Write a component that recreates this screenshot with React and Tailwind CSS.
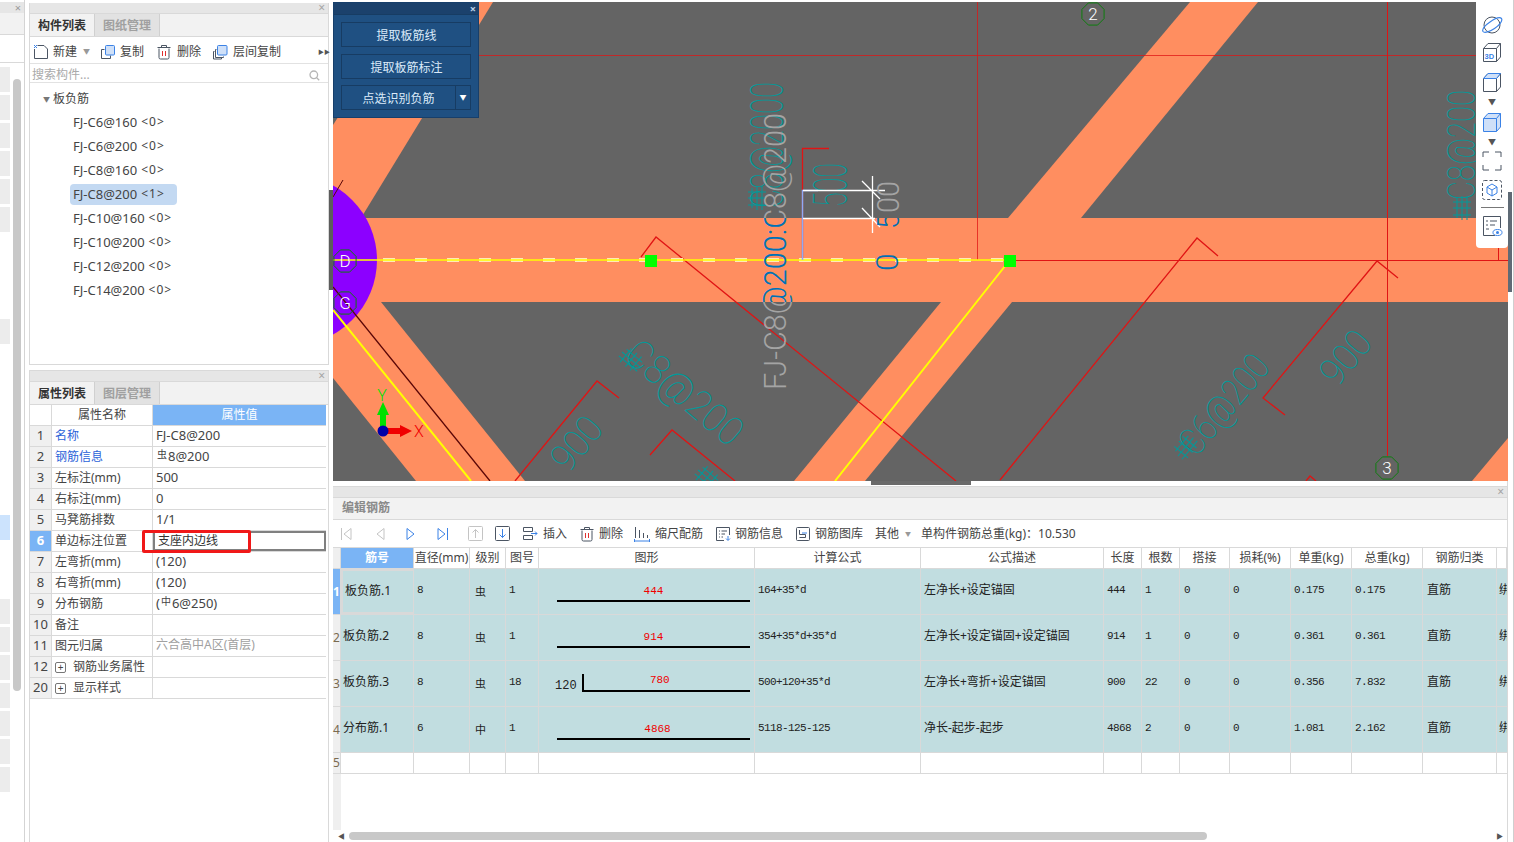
import React from 'react';

const slate = '#4b5563';
const blue = '#3b82e6';
const pale = '#cfe0f8';

// ---------- icons ----------
const Ic = ({ w = 16, h = 16, children, className = '' }) => (
  <svg width={w} height={h} viewBox={`0 0 ${w} ${h}`} fill="none" className={`shrink-0 ${className}`}>{children}</svg>
);

const NewIcon = () => (
  <Ic>
    <path d="M4.500 1.500H11l3.500 3.500v9.500h-13V5" stroke={slate} />
    <path d="M1 1h1v1H1zM3 1h1v1H3zM2 2h1v1H2zM1 3h1v1H1zM3 3h1v1H3z" fill={blue} />
  </Ic>
);
const CopyIcon = () => (
  <Ic>
    <path d="M4.500 5.500h-3v9h9v-3" stroke={slate} />
    <rect x="5.500" y="1.500" width="9" height="9.500" rx="1" fill={pale} stroke={blue} />
  </Ic>
);
const TrashIcon = () => (
  <Ic w={14}>
    <path d="M2 4.500v9a1.500 1.500 0 0 0 1.500 1.500h7a1.500 1.500 0 0 0 1.500-1.500v-9M.5 3.500h13M4.500 3.500V1.500h5v2" stroke={slate} />
    <path d="M5.500 7v5M8.500 7v5" stroke="#e03030" />
  </Ic>
);
const FloorCopyIcon = () => (
  <Ic>
    <path d="M4.500 5.500h-1v8h8v-1M2.500 7.500h-1v7.500h8v-1" stroke={slate} />
    <rect x="5.500" y="1.500" width="9.500" height="9.500" rx="1" fill={pale} stroke={blue} />
  </Ic>
);
const Tri = ({ dir = 'left', bar, color }) => (
  <Ic w={12} h={14}>
    {dir === 'left' ? <path d="M10 1.500v11L3 7z" stroke={color} /> : <path d="M2 1.500v11L9 7z" stroke={color} />}
    {bar && <path d={dir === 'left' ? 'M.5 1v12' : 'M11.500 1v12'} stroke={color} />}
  </Ic>
);
const BoxArrow = ({ up }) => (
  <Ic w={15} h={15}>
    <rect x=".5" y=".5" width="14" height="14" rx="1" stroke={up ? '#c4c4c4' : slate} />
    {up
      ? <path d="M7.500 12V3.500M4.500 6.500l3-3 3 3" stroke="#c4c4c4" />
      : <path d="M7.500 3v8.500M4.500 8.500l3 3 3-3" stroke={blue} />}
  </Ic>
);
const InsertIcon = () => (
  <Ic>
    <path d="M1.500 1.500h9v4h-9zM1.500 9.500h9v4h-9z" stroke={slate} />
    <path d="M9 7.500h6M13 5.500l2 2-2 2" stroke={blue} />
  </Ic>
);
const ScaleIcon = () => (
  <Ic>
    <path d="M1.500 1v11M5.500 4v8M9.500 7v5M13.500 9v3" stroke={slate} />
    <path d="M.5 15h15M.5 13v3M15.500 13v3" stroke={blue} />
  </Ic>
);
const InfoIcon = () => (
  <Ic>
    <path d="M9 14.500H1.500v-13h13V9" stroke={slate} />
    <path d="M4 5h1M6.500 5H12M4 8h1M6.500 8H10M4 11h1M6.500 11H8" stroke={slate} />
    <path d="M13 10v4M11 12.500l2 2 2-2" stroke={blue} />
  </Ic>
);
const LibIcon = () => (
  <Ic>
    <rect x="1.500" y="1.500" width="13" height="13" rx="1" stroke={slate} />
    <path d="M4.500 4v4.500h6v3h-6" stroke={slate} />
    <path d="M7 7h5" stroke={blue} />
  </Ic>
);
const Cube = ({ fill, stroke, children }) => (
  <Ic w={20} h={21}>
    <path d="M1.500 6.500 6 1.500h12.500v13.500L14.500 19.500h-13z" fill={fill || 'none'} stroke={stroke} strokeLinejoin="round" />
    <path d="M1.500 6.500h13v13M14.500 6.500 18.500 1.500" stroke={stroke} />
    {children}
  </Ic>
);

// ---------- left strip ----------
const stripSlots = [1, 1, 1, 1, 1, 1, 0, 0, 0, 1, 0, 0, 0, 0, 0, 0, 2, 0, 0, 1, 1, 1, 1, 1, 1, 1];

function LeftStrip() {
  return (
    <div className="w-[29px] shrink-0 h-full">
      <div className="w-[25px] h-full border-r border-[#d4d4d4]">
        <div className="h-[2px]" />
        <div className="h-[11px] bg-[#e6e6e6] flex items-center justify-end pr-[3px] text-[#9a9a9a] text-[11px] leading-none">×</div>
        <div className="h-[22px] bg-[#f2f2f2] border-b border-[#d9d9d9]" />
        <div className="h-[28px] border-b border-[#d9d9d9]" />
        <div className="flex">
          <div className="w-[10px] pt-[4px] flex flex-col gap-[3px]">
            {stripSlots.map((s, i) => (
              <div key={i} className={`h-[25px] ${s === 1 ? 'bg-[#ececec]' : s === 2 ? 'bg-[#cce3fd]' : ''}`} />
            ))}
          </div>
          <div className="ml-[3px] mt-[16px] w-[8px] h-[612px] rounded bg-[#c8c8c8]" />
        </div>
      </div>
    </div>
  );
}

// ---------- component list ----------
const treeItems = ['FJ-C6@160', 'FJ-C6@200', 'FJ-C8@160', 'FJ-C8@200', 'FJ-C10@160', 'FJ-C10@200', 'FJ-C12@200', 'FJ-C14@200'];

function PanelHead() {
  return (
    <div className="h-[11px] bg-[#e6e6e6] flex items-center justify-end pr-[3px] text-[#a5a5a5] text-[12px] leading-none border-b border-[#d9d9d9]">×</div>
  );
}

function Tabs({ a, b }) {
  return (
    <div className="h-[23px] bg-[#f2f2f2] border-b border-[#d9d9d9] flex font-bold">
      <div className="w-[65px] pt-[2px] flex items-center justify-center text-[#333] border-r border-[#d0d0d0]">{a}</div>
      <div className="w-[65px] pt-[2px] flex items-center justify-center text-[#a0a0a0] bg-[#e2e2e2] border-r border-[#d0d0d0]">{b}</div>
    </div>
  );
}

function ComponentPanel() {
  return (
    <div className="h-[362px] border border-[#d9d9d9] border-t-0 mt-[3px] flex flex-col">
      <PanelHead />
      <Tabs a="构件列表" b="图纸管理" />
      <div className="h-[27px] pt-[3px] border-b border-[#e2e2e2] flex items-center whitespace-nowrap">
        <div className="ml-[3px]"><NewIcon /></div>
        <span className="ml-[4px]">新建</span>
        <span className="ml-[6px] text-[#999] text-[7px]">▼</span>
        <div className="ml-[10px]"><CopyIcon /></div>
        <span className="ml-[4px]">复制</span>
        <div className="ml-[13px]"><TrashIcon /></div>
        <span className="ml-[6px]">删除</span>
        <div className="ml-[11px]"><FloorCopyIcon /></div>
        <span className="ml-[5px]">层间复制</span>
        <span className="ml-[37px] text-[6px] text-[#555]">▶▶</span>
      </div>
      <div className="h-[19px] pt-[4px] border-b border-[#e2e2e2] flex items-center justify-between pl-[2px] pr-[8px] text-[#aaa]">
        <span>搜索构件...</span>
        <svg width="11" height="11" viewBox="0 0 11 11" fill="none" stroke="#b5b5b5" strokeWidth="1.300">
          <circle cx="4.800" cy="4.800" r="3.800" /><path d="M7.700 7.700l2.500 2.500" />
        </svg>
      </div>
      <div className="flex-1 pt-[3px]">
        <div className="h-[24px] pt-[2px] flex items-center pl-[13px]">
          <span className="text-[#777] text-[7px] mr-[3px]">▼</span>板负筋
        </div>
        {treeItems.map((t, i) => (
          <div key={t} className="h-[24px] flex items-center pl-[40px]">
            <span className={`h-[21px] flex items-center px-[3px] text-[13px] rounded-sm ${i === 3 ? 'bg-[#c3d9f2] w-[107px]' : ''}`}>
              {t}<span className="ml-[4px] text-[12px] tracking-[1px]">&lt;{i === 3 ? 1 : 0}&gt;</span>
            </span>
          </div>
        ))}
      </div>
    </div>
  );
}

// ---------- property table ----------
const Sym = ({ children }) => <span className="text-[10px] relative -top-[2px] mx-[1px]">{children}</span>;

const props = [
  ['1', '名称', 'FJ-C8@200', 'blue'],
  ['2', '钢筋信息', <><Sym>虫</Sym>8@200</>, 'blue'],
  ['3', '左标注(mm)', '500'],
  ['4', '右标注(mm)', '0'],
  ['5', '马凳筋排数', '1/1'],
  ['6', '单边标注位置', <span className="text-[12px]">支座内边线</span>, 'sel'],
  ['7', '左弯折(mm)', '(120)'],
  ['8', '右弯折(mm)', '(120)'],
  ['9', '分布钢筋', <>(<Sym>中</Sym>6@250)</>],
  ['10', '备注', ''],
  ['11', '图元归属', <span className="text-[12px] text-[#a0a0a0]">六合高中A区(首层)</span>],
  ['12', '钢筋业务属性', '', 'plus'],
  ['20', '显示样式', '', 'plus'],
];

function PropertyPanel() {
  return (
    <div className="flex-1 mt-[5px] border border-[#d9d9d9] border-b-0 flex flex-col relative">
      <PanelHead />
      <Tabs a="属性列表" b="图层管理" />
      <div className="w-[296px]">
        <div className="grid grid-cols-[22px_101px_173px] h-[21px] border-b border-[#d9d9d9]">
          <div className="border-r border-[#d9d9d9]" />
          <div className="border-r border-[#d9d9d9] flex items-center justify-center">属性名称</div>
          <div className="bg-[#7ab4f5] text-white flex items-center justify-center">属性值</div>
        </div>
        {props.map(([n, name, val, kind]) => (
          <div key={n} className="grid grid-cols-[22px_101px_173px] h-[21px] border-b border-[#d9d9d9]">
            <div className={`border-r border-[#d9d9d9] text-[13px] pb-[2px] flex items-center justify-center ${kind === 'sel' ? 'bg-[#7ab4f5] text-white font-bold' : 'bg-[#f0f0f0]'}`}>{n}</div>
            <div className={`border-r border-[#d9d9d9] flex items-center pl-[3px] whitespace-nowrap ${kind === 'blue' ? 'text-[#2b63d9]' : ''}`}>
              {kind === 'plus' && (
                <span className="w-[11px] h-[11px] border border-[#777] rounded-[2px] mr-[7px] flex items-center justify-center text-[10px] leading-none">+</span>
              )}
              {name}
            </div>
            <div className={`flex items-center pl-[3px] text-[13px] ${kind === 'sel' ? 'border-2 border-[#808080] text-[#333]' : 'pb-[2px]'}`}>{val}</div>
          </div>
        ))}
      </div>
      {/* red annotation box */}
      <div className="absolute left-[112px] top-[159px] w-[109px] h-[23px] border-[3px] border-[#f01818] rounded-[2px]" />
    </div>
  );
}

// ---------- CAD drawing ----------
const TEAL = '#009a9a';

function Hollow({ x, y, r, size, len, children }) {
  return (
    <text
      transform={`translate(${x} ${y}) rotate(${r})`}
      fontFamily="Roboto, 'Liberation Sans', sans-serif"
      fontWeight="100"
      fontSize={size}
      textLength={len}
      lengthAdjust="spacingAndGlyphs"
      fill={TEAL}
    >
      {children}
    </text>
  );
}

function Axis({ x, y, label }) {
  return (
    <g>
      <polygon
        points={[0, 1, 2, 3, 4, 5, 6, 7].map((i) => {
          const a = (Math.PI / 4) * i + Math.PI / 8;
          return `${x + 12 * Math.cos(a)},${y + 12 * Math.sin(a)}`;
        }).join(' ')}
        fill="none"
        stroke="#0d7d0d"
      />
      <text x={x} y={y + 6} textAnchor="middle" fill="#fff" fontFamily="Roboto, sans-serif" fontWeight="300" fontSize="17">{label}</text>
    </g>
  );
}

function Hatch({ x, y, r }) {
  return (
    <g transform={`translate(${x} ${y}) rotate(${r})`} stroke={TEAL}>
      <path d="M0 0h24M2 -5h20M0 5h24M5 -9v18M12 -9v18M18 -9v18" />
    </g>
  );
}

const thin = { fontFamily: "Roboto, 'Liberation Sans', sans-serif", fontWeight: 300 };

function CadCanvas() {
  const dashes = [];
  for (let x = 383; x < 1000; x += 32) dashes.push(x);
  return (
    <svg width="1175" height="479" viewBox="333 2 1175 479" className="block">
      <defs>
        <clipPath id="band"><rect x="333" y="218" width="1175" height="84" /></clipPath>
      </defs>
      <rect x="333" y="2" width="1175" height="479" fill="#646464" />
      {/* beams */}
      <g fill="#ff8e60">
        <rect x="333" y="218" width="1175" height="84" />
        <polygon points="1008,218 1190,2 1258,2 1081,218" />
        <polygon points="941,302 1012,302 865,481 794,481" />
        <polygon points="493,2 361,218 333,218 333,125 412,2" />
        <polygon points="333,302 381,302 525,481 416,481 333,378" />
        <polygon points="1472,481 1508,438 1508,481" />
      </g>
      <circle cx="292" cy="260" r="85" fill="#8c00ff" />

      {/* axis and rebar lines */}
      <g stroke="#e01414" fill="none">
        <path d="M333 55.500H1476" strokeOpacity=".75" />
        <path d="M977.500 2V260" strokeOpacity=".75" />
        <path d="M1387.500 2V456" />
        <path d="M1010 260.500H1508M1498.500 248V260" />
        <path d="M1218 256 1197 238 1000 480" strokeWidth="1.300" />
        <path d="M1398 278 1377 261 1263 398 1285 415" strokeWidth="1.300" />
        <path d="M641 257 656 237 956 481" strokeWidth="1.300" />
        <path d="M619 398 597 381 515 481" strokeWidth="1.300" />
        <path d="M650 455 672 430 735 481" strokeWidth="1.300" />
        <path d="M1306 481 1310 476 1316 481" strokeWidth="1.300" />
        <path d="M829 148.500H802.500V260H830" strokeWidth="1.300" />
      </g>
      {dashes.map((x) => <rect key={x} x={x} y="258" width="12" height="4" fill="#ffe9b8" />)}
      <path d="M333 260H1010" stroke="#ffff00" strokeWidth="1.500" />
      <path d="M333 310 471 481M1009 261 835 481" stroke="#ffff00" strokeWidth="2" fill="none" />
      <path d="M333 287 490 481" stroke="#5a0606" strokeWidth="1.300" fill="none" />
      <path d="M343 180 333 197" stroke="#5a0606" fill="none" />

      {/* teal annotations */}
      <Hollow x={783} y={208} r={-90} size={46} len={126}>C8@2000</Hollow>
      <Hatch x={757} y={210} r={-90} />
      <Hollow x={847} y={207} r={-90} size={48} len={44}>500</Hollow>
      <Hollow x={1475} y={200} r={-90} size={38} len={110}>C8@200</Hollow>
      <Hatch x={1462} y={220} r={-90} />
      <Hollow x={622} y={358} r={40} size={40} len={140}>C8@200</Hollow>
      <Hatch x={622} y={352} r={40} />
      <Hollow x={568} y={474} r={-50} size={38} len={58}>900</Hollow>
      <Hollow x={1337} y={388} r={-50} size={38} len={58}>900</Hollow>
      <Hollow x={1196} y={458} r={-50} size={38} len={118}>C6@200</Hollow>
      <Hatch x={1178} y={456} r={-50} />
      <Hatch x={698} y={470} r={40} />

      {/* selected bar marker */}
      <path d="M802.500 260V190.500H818" stroke="#8eaaf5" strokeWidth="1.500" fill="none" />
      <path d="M803 190.500H885M803 218.500H875M872.500 176V233M862 181 880 199M862 208 880 227" stroke="#fff" strokeWidth="1.300" fill="none" />

      {/* label of selected bar, blue where it crosses the beam */}
      <text transform="translate(786 390) rotate(-90)" {...thin} fontSize="32" textLength="277" lengthAdjust="spacingAndGlyphs" fill="#a4a4a4">FJ-C8@200:C8@200</text>
      <g clipPath="url(#band)">
        <text transform="translate(786 390) rotate(-90)" {...thin} fontSize="32" textLength="277" lengthAdjust="spacingAndGlyphs" fill="#0070b4">FJ-C8@200:C8@200</text>
        <text transform="translate(899 229) rotate(-90)" {...thin} fontSize="32" textLength="48" lengthAdjust="spacingAndGlyphs" fill="#0070b4">500</text>
      </g>
      <text transform="translate(899 229) rotate(-90)" {...thin} fontSize="32" textLength="48" lengthAdjust="spacingAndGlyphs" fill="#a4a4a4">
        <tspan fill="none">5</tspan>00
      </text>
      <text transform="translate(898 271) rotate(-90)" {...thin} fontSize="32" fill="#0070b4">0</text>

      {/* grip points */}
      <rect x="645" y="255" width="12" height="12" fill="#00ff00" />
      <rect x="1004" y="255" width="12" height="12" fill="#00ff00" />

      <Axis x={1093} y={14} label="2" />
      <Axis x={345} y={261} label="D" />
      <Axis x={345} y={303} label="G" />
      <Axis x={1387} y={468} label="3" />

      {/* coordinate gizmo */}
      <path d="M380 431v-17h6v17z" fill="#00e000" />
      <polygon points="383,402 377,415 389,415" fill="#00e000" />
      <path d="M383 428h17v6h-17z" fill="#f00000" />
      <polygon points="412,431 400,425 400,437" fill="#f00000" />
      <circle cx="383" cy="431" r="5.500" fill="#0000a8" />
      <text x="382" y="401" textAnchor="middle" fill="#00e000" {...thin} fontSize="16">Y</text>
      <text x="419" y="437" textAnchor="middle" fill="#f00000" {...thin} fontSize="16">X</text>
    </svg>
  );
}

function FloatPanel() {
  const btn = 'h-[25px] border border-[#173c63] flex items-center justify-center';
  return (
    <div className="absolute left-0 top-0 w-[146px] h-[116px] bg-[#1f5082] border border-[#173f6b] text-[#dcebfa] z-10">
      <div className="h-[12px] bg-[#1b416c] border-b border-[#173c63] flex items-center justify-end pr-[2px] text-[11px] leading-none font-bold text-[#b9cfe6]">×</div>
      <div className="px-[7px] pt-[7px] flex flex-col gap-[7px]">
        <div className={`${btn} pt-[2px] pl-[1px]`}>提取板筋线</div>
        <div className={`${btn} pt-[2px] pl-[1px]`}>提取板筋标注</div>
        <div className="flex h-[25px] -mt-[1px]">
          <div className={`${btn} flex-1 border-r-0 pt-[2px]`}>点选识别负筋</div>
          <div className={`${btn} w-[16px] text-white text-[7px]`}>▼</div>
        </div>
      </div>
    </div>
  );
}

function Palette() {
  const tri = <span className="text-[#555] text-[8px] leading-none">▼</span>;
  return (
    <div className="absolute left-[1143px] top-0 w-[32px] h-[246px] bg-white rounded-b-sm flex flex-col items-center pt-[12px] z-10">
      <Ic w={22} h={22}>
        <circle cx="11" cy="11" r="8" stroke={slate} />
        <path d="M2 17.500C-.5 13 17 1 20.500 4.500c1.500 2.500-2.500 7-7 10S3.500 19.500 2 17.500z" stroke={blue} strokeWidth="1.200" />
      </Ic>
      <div className="mt-[6px]">
        <Cube stroke={slate}>
          <text x="2.500" y="17" fontSize="7.500" fontWeight="bold" fill={blue} fontFamily="'Liberation Sans', sans-serif">3D</text>
        </Cube>
      </div>
      <div className="mt-[9px]"><Cube stroke={slate}><path d="M1.500 6.500 6 1.500h12.500L14.500 6.500z" fill={pale} stroke={blue} /></Cube></div>
      <div className="mt-[2px]">{tri}</div>
      <div className="mt-[5px]"><Cube fill={pale} stroke={blue} /></div>
      <div className="mt-[2px]">{tri}</div>
      <div className="mt-[4px]">
        <Ic w={20} h={20}>
          <path d="M1 6V1h6M13 1h6v5M19 14v5h-6M7 19H1v-5" stroke={slate} />
        </Ic>
      </div>
      <div className="mt-[9px]">
        <Ic w={20} h={20}>
          <rect x=".5" y=".5" width="19" height="19" rx="2" stroke={slate} strokeDasharray="3 2" />
          <path d="M10 4l5 3v6l-5 3-5-3V7zM5 7l5 3 5-3M10 10v6" stroke={blue} />
        </Ic>
      </div>
      <div className="mt-[7px] w-[23px] h-px bg-[#777]" />
      <div className="mt-[8px]">
        <Ic w={21} h={21}>
          <path d="M13 19.500H1.500V.5h17V12" stroke={slate} />
          <path d="M4 5h2M8 5h7M4 9h2M8 9h5M4 13h3" stroke={slate} />
          <ellipse cx="15.500" cy="16.500" rx="4.500" ry="3" stroke={blue} />
          <circle cx="15.500" cy="16.500" r="1.500" fill={blue} />
        </Ic>
      </div>
    </div>
  );
}

// ---------- rebar grid ----------
const cols = 'grid grid-cols-[8px_73px_56px_36px_33px_216px_166px_183px_38px_38px_50px_61px_61px_71px_74px_10px]';
const heads = ['筋号', '直径(mm)', '级别', '图号', '图形', '计算公式', '公式描述', '长度', '根数', '搭接', '损耗(%)', '单重(kg)', '总重(kg)', '钢筋归类', ''];

const rows = [
  { n: '1', name: '板负筋.1', d: '8', g: '虫', no: '1', num: '444', f: '164+35*d', desc: '左净长+设定锚固', len: '444', cnt: '1', w1: '0.175', w2: '0.175' },
  { n: '2', name: '板负筋.2', d: '8', g: '虫', no: '1', num: '914', f: '354+35*d+35*d', desc: '左净长+设定锚固+设定锚固', len: '914', cnt: '1', w1: '0.361', w2: '0.361' },
  { n: '3', name: '板负筋.3', d: '8', g: '虫', no: '18', num: '780', hook: true, f: '500+120+35*d', desc: '左净长+弯折+设定锚固', len: '900', cnt: '22', w1: '0.356', w2: '7.832' },
  { n: '4', name: '分布筋.1', d: '6', g: '中', no: '1', num: '4868', f: '5118-125-125', desc: '净长-起步-起步', len: '4868', cnt: '2', w1: '1.081', w2: '2.162', shift: 'pl-[8px]' },
];

const cell = 'border-r border-[#d9d9d9] flex items-center overflow-hidden whitespace-nowrap';
const mono = "font-['Liberation_Mono',monospace] text-[11px] tracking-[-0.6px] text-[#222] pb-[3px]";
const monoRed = "font-['Liberation_Mono',monospace] text-[11px] text-[#f00000]";

function Shape({ r }) {
  if (r.hook) {
    return (
      <div className="w-full flex items-end pl-[16px] pr-[4px] pb-[2px]">
        <span className="font-['Liberation_Mono',monospace] text-[12px] text-[#222] mr-[5px]">120</span>
        <div className="flex-1 h-[18px] border-l-2 border-b-2 border-black text-center">
          <span className={`${monoRed} relative -top-[1px] -left-[7px]`}>{r.num}</span>
        </div>
      </div>
    );
  }
  return (
    <div className="w-full pl-[18px] pr-[4px] pt-[3px]">
      <div className={`${monoRed} text-center leading-[13px] mb-[2px] ${r.shift || ''}`}>{r.num}</div>
      <div className="h-[2px] bg-black" />
    </div>
  );
}

function RebarRow({ r, first }) {
  return (
    <div className={`${cols} h-[46px] border-b border-[#d9d9d9] bg-[#c1dde0]`}>
      <div className={`flex items-center justify-center text-[12px] border-r border-[#d9d9d9] ${first ? 'bg-[#7ab4f5] text-white font-bold' : 'bg-[#efefef] text-[#7a6a50]'}`}>{r.n}</div>
      <div className={`${cell} pl-[2px] text-[#222] ${first ? 'border-2 border-[#808080] pb-[1px]' : 'pb-[3px]'}`}>{r.name}</div>
      <div className={`${cell} ${mono} pl-[3px]`}>{r.d}</div>
      <div className={`${cell} text-[11px] text-[#222] pl-[5px]`}>{r.g}</div>
      <div className={`${cell} ${mono} pl-[3px]`}>{r.no}</div>
      <div className={cell}><Shape r={r} /></div>
      <div className={`${cell} ${mono} pl-[3px]`}>{r.f}</div>
      <div className={`${cell} text-[#222] pl-[3px] pb-[3px]`}>{r.desc}</div>
      <div className={`${cell} ${mono} pl-[3px]`}>{r.len}</div>
      <div className={`${cell} ${mono} pl-[3px]`}>{r.cnt}</div>
      <div className={`${cell} ${mono} pl-[4px]`}>0</div>
      <div className={`${cell} ${mono} pl-[3px]`}>0</div>
      <div className={`${cell} ${mono} pl-[3px]`}>{r.w1}</div>
      <div className={`${cell} ${mono} pl-[3px]`}>{r.w2}</div>
      <div className={`${cell} text-[#222] pl-[4px] pb-[3px]`}>直筋</div>
      <div className="flex items-center overflow-hidden whitespace-nowrap pl-[2px] pb-[3px] text-[#222]">绑扎</div>
    </div>
  );
}

function RebarPanel() {
  return (
    <div className="flex-1 flex flex-col border-r border-[#d9d9d9] min-h-0">
      <div className="h-[5px] relative bg-white">
        <div className="absolute left-[538px] top-0 w-[100px] h-[4px] bg-[#6a6a6a]" />
      </div>
      <div className="h-[12px] bg-[#e6e6e6] border-y border-[#d9d9d9] flex items-center justify-end pr-[3px] text-[#a5a5a5] leading-none">×</div>
      <div className="h-[22px] pb-[2px] bg-[#f2f2f2] border-b border-[#d9d9d9] flex items-center pl-[9px] text-[#8a8a8a] font-bold">编辑钢筋</div>
      <div className="h-[28px] border-b border-[#d9d9d9] flex items-center whitespace-nowrap">
        <div className="ml-[8px]"><Tri dir="left" bar color="#c4c4c4" /></div>
        <div className="ml-[21px]"><Tri dir="left" color="#c4c4c4" /></div>
        <div className="ml-[19px]"><Tri dir="right" color={blue} /></div>
        <div className="ml-[19px]"><Tri dir="right" bar color={blue} /></div>
        <div className="ml-[20px]"><BoxArrow up /></div>
        <div className="ml-[12px]"><BoxArrow /></div>
        <div className="ml-[12px]"><InsertIcon /></div>
        <span className="ml-[5px]">插入</span>
        <div className="ml-[13px]"><TrashIcon /></div>
        <span className="ml-[5px]">删除</span>
        <div className="ml-[11px]"><ScaleIcon /></div>
        <span className="ml-[5px]">缩尺配筋</span>
        <div className="ml-[12px]"><InfoIcon /></div>
        <span className="ml-[4px]">钢筋信息</span>
        <div className="ml-[12px]"><LibIcon /></div>
        <span className="ml-[4px]">钢筋图库</span>
        <span className="ml-[12px]">其他</span>
        <span className="ml-[6px] text-[#999] text-[6px]">▼</span>
        <span className="ml-[10px]">单构件钢筋总重(kg)：10.530</span>
      </div>
      <div className={`${cols} h-[21px] border-b border-[#d9d9d9]`}>
        <div className="bg-[#efefef] border-r border-[#d9d9d9]" />
        {heads.map((h, i) => (
          <div key={i} className={`flex items-center justify-center whitespace-nowrap overflow-hidden border-r border-[#d9d9d9] ${i === 0 ? 'bg-[#7ab4f5] text-white font-bold' : ''}`}>{h}</div>
        ))}
      </div>
      {rows.map((r, i) => <RebarRow key={r.n} r={r} first={i === 0} />)}
      <div className={`${cols} h-[21px] border-b border-[#d9d9d9]`}>
        <div className="bg-[#efefef] border-r border-[#d9d9d9] flex items-center justify-center text-[#7a6a50]">5</div>
        {heads.map((h, i) => <div key={i} className={i < 14 ? 'border-r border-[#d9d9d9]' : ''} />)}
      </div>
      <div className="flex-1 w-[8px] bg-[#efefef]" />
      <div className="h-[12px] flex items-center pl-[5px] pr-[4px]">
        <span className="text-[7px] text-[#555] rotate-90">▼</span>
        <div className="ml-[4px] w-[858px] h-[8px] rounded bg-[#c8c8c8]" />
        <span className="ml-auto text-[7px] text-[#555] -rotate-90">▼</span>
      </div>
    </div>
  );
}

export default function App() {
  return (
    <div className="w-[1514px] h-[842px] overflow-hidden bg-white flex text-[12px] leading-none text-[#444] font-['Noto_Sans','Noto_Sans_CJK_SC',sans-serif]">
      <LeftStrip />
      <div className="w-[300px] shrink-0 h-full flex flex-col">
        <ComponentPanel />
        <PropertyPanel />
      </div>
      {/* splitter */}
      <div className="w-[4px] shrink-0 h-full relative">
        <div className="absolute left-0 top-[190px] w-[4px] h-[100px] bg-[#5c5c5c]" />
      </div>
      <div className="w-[1175px] shrink-0 h-full flex flex-col">
        <div className="h-[2px]" />
        <div className="relative h-[479px]">
          <CadCanvas />
          <FloatPanel />
          <Palette />
        </div>
        <RebarPanel />
      </div>
      {/* right scrollbar */}
      <div className="flex-1 h-full flex">
        <div className="w-[4px] pt-[192px]"><div className="h-[100px] bg-[#5f6a75]" /></div>
        <div className="ml-px w-px bg-[#cfcfcf]" />
      </div>
    </div>
  );
}
